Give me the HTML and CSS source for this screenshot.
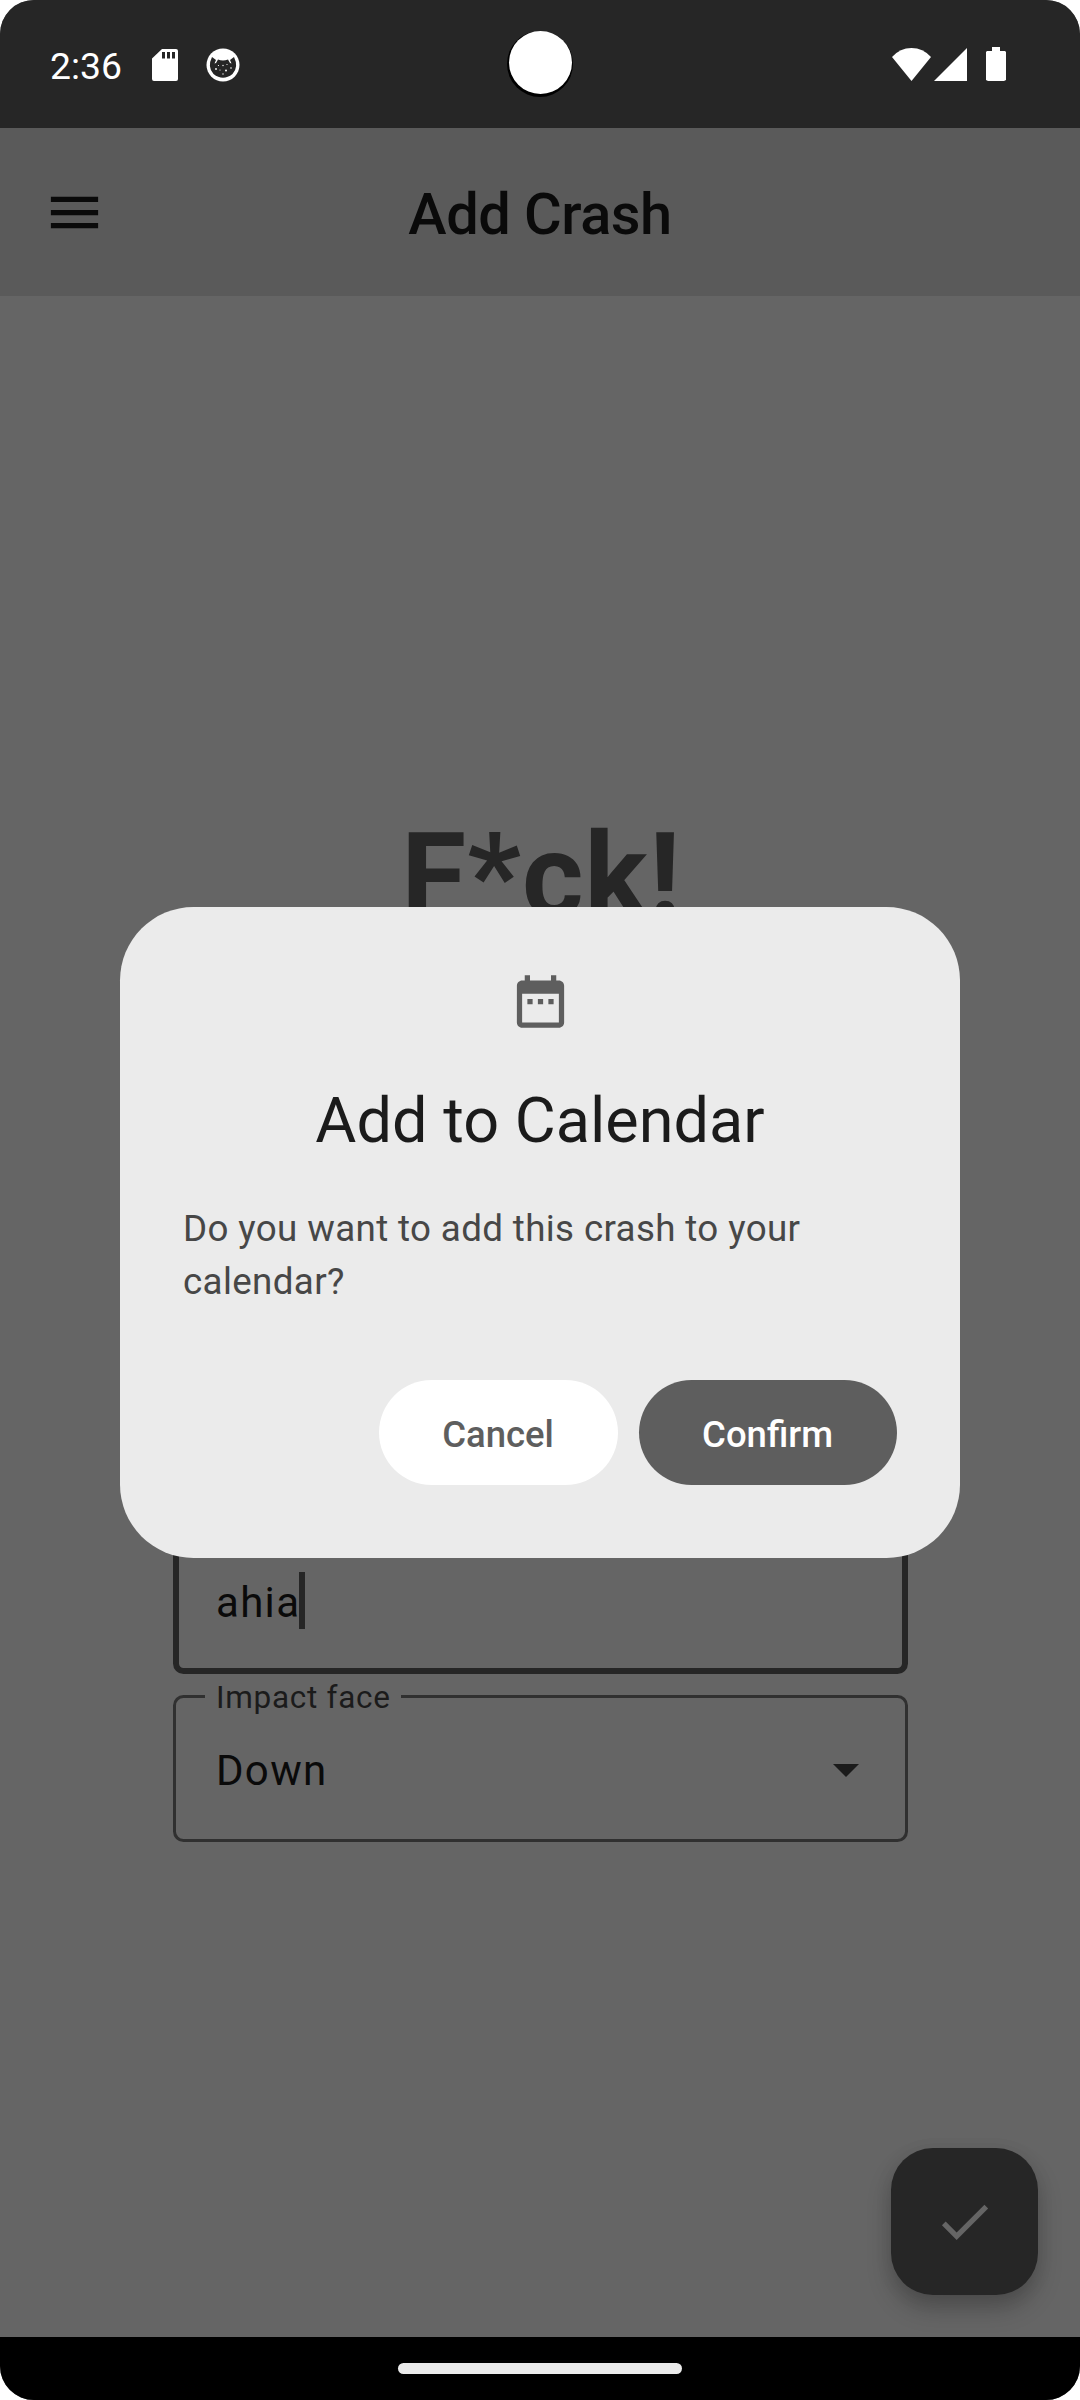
FILE: index.html
```html
<!DOCTYPE html>
<html lang="en">
<head>
<meta charset="utf-8">
<title>Add Crash</title>
<link rel="stylesheet" href="styles.css">
</head>
<body>
<div class="screen">
  <header class="status">
    <span class="clock">2:36</span>
    <svg class="sd" viewBox="0 0 26 32"><path fill="#fff" fill-rule="evenodd" d="M10 0H24a2 2 0 0 1 2 2V30a2 2 0 0 1-2 2H2a2 2 0 0 1-2-2V9.500zM10 3V9.500H13V3zM15 3V9.500H18V3zM20 3V9.500H23V3z"/></svg>
    <svg class="cat" viewBox="0 0 34 34"><circle cx="17" cy="17" r="16.500" fill="#fff"/><path fill="#262626" d="M6 9 10 12 8.500 15.500 10 15 12 11.500Q17 13.500 22 11.500L24 15 25.500 15.500 24 12 28 9Q33 19 26.500 26 17 33.500 7.500 26 1 19 6 9z"/><g fill="#fff"><circle cx="10" cy="21" r=".9"/><circle cx="17" cy="17.500" r=".7"/><circle cx="14" cy="22" r=".6"/><circle cx="20" cy="22.500" r="1"/><circle cx="25" cy="20" r=".8"/><circle cx="17" cy="26" r=".7"/><circle cx="21" cy="16.500" r=".6"/><circle cx="12.500" cy="17.500" r=".6"/></g></svg>
    <span class="camera"></span>
    <svg class="wifi" viewBox="0 0 39 33"><path fill="#fff" d="M0 9Q8 0 19.500 0T39 9L19.500 33z"/></svg>
    <svg class="signal" viewBox="0 0 33 33"><path fill="#fff" d="M33 0V33H0z"/></svg>
    <svg class="battery" viewBox="0 0 20 34"><path fill="#fff" d="M6 0H14V4H19L20 5V33L18 34H2L0 33V5L1 4H6z"/></svg>
  </header>
  <div class="appbar">
    <svg class="icon" viewBox="0 0 24 24"><path fill="#0a0a0a" d="M3 18h18v-2H3v2zm0-5h18v-2H3v2zm0-7v2h18V6H3z"/></svg>
    <h1 class="title">Add Crash</h1>
  </div>
  <main class="content">
    <div class="headline">F*ck!</div>
    <div class="field focused"><span>ahia</span><i class="caret"></i></div>
    <div class="field select">
      <span class="label">Impact face</span>
      <span>Down</span>
      <svg class="arrow" viewBox="0 0 26 13"><path fill="#1b1b1b" d="M0 0H26L13 13z"/></svg>
    </div>
    <button class="fab"><svg class="icon" viewBox="0 0 24 24"><path fill="#656565" d="M9 16.170 4.830 12l-1.420 1.410L9 19 21 7l-1.410-1.410z"/></svg></button>
  </main>
  <footer class="nav"><span class="pill"></span></footer>
  <section class="dialog">
    <svg class="icon" viewBox="0 0 24 24"><path fill="#5e5e5e" d="M9 11H7v2h2v-2zm4 0h-2v2h2v-2zm4 0h-2v2h2v-2zm2-7h-1V2h-2v2H8V2H6v2H5c-1.110 0-1.990.9-1.990 2L3 20c0 1.100.89 2 2 2h14c1.100 0 2-.9 2-2V6c0-1.100-.9-2-2-2zm0 16H5V9h14v11z"/></svg>
    <h2 class="dialog-title">Add to Calendar</h2>
    <p class="dialog-text">Do you want to add this crash to your calendar?</p>
    <div class="actions">
      <button class="btn cancel">Cancel</button>
      <button class="btn confirm">Confirm</button>
    </div>
  </section>
</div>
</body>
</html>
```
FILE: styles.css
```css
* { box-sizing: border-box; }
body { margin: 0; background: #fff; font-family: Roboto, sans-serif; }
svg { display: block; flex: none; }
button { border: 0; font-family: inherit; }
.screen { position: relative; width: 1080px; height: 2400px; display: flex; flex-direction: column; background: #656565; border-radius: 34px; overflow: hidden; }
.status { position: relative; height: 128px; background: #262626; color: #fff; display: flex; align-items: center; padding: 0 74px 0 50px; }
.clock { width: 102px; font-size: 37.300px; line-height: 44px; margin-top: 4px; }
.sd { width: 26px; height: 32px; margin-top: 2px; }
.cat { width: 34px; height: 34px; margin: 2px 0 0 28px; }
.wifi { width: 39px; height: 33px; margin-left: auto; }
.signal { width: 33px; height: 33px; margin-left: 3px; }
.battery { width: 20px; height: 34px; margin-left: 19px; }
.camera { position: absolute; left: 509px; top: 31px; width: 63px; height: 63px; border-radius: 50%; background: #fff; box-shadow: -0.500px 1.500px 0 1.500px #000; }
.appbar { height: 168px; background: #5a5a5a; display: grid; grid-template-columns: 63px 1fr 63px; align-items: center; padding: 0 43px; color: #0a0a0a; }
.icon { width: 63px; height: 63px; }
.title { margin: 0; padding-top: 4px; text-align: center; font-size: 57.750px; line-height: 73px; font-weight: 500; letter-spacing: -.5px; }
.content { position: relative; height: 2041px; padding: 512px 172px 0 173px; }
.headline { height: 719px; padding-left: 2px; text-align: center; font-size: 118.125px; line-height: 138px; font-weight: 700; letter-spacing: 1.100px; color: #262626; }
.field { position: relative; display: flex; align-items: center; height: 147px; padding: 0 40px; border: 3px solid #303030; border-radius: 10.500px; color: #0a0a0a; font-size: 42px; letter-spacing: 1.312px; }
.field > span:not(.label) { padding-top: 4px; }
.focused { border: 6px solid #262626; padding: 0 37px; }
.caret { width: 5.250px; height: 57px; background: #262626; margin-left: -1px; }
.select { margin-top: 21px; }
.label { position: absolute; left: 29px; top: -21px; padding: 0 11px; width: 196px; background: #656565; color: #1b1b1b; font-size: 31.500px; line-height: 42px; letter-spacing: .7px; white-space: nowrap; }
.arrow { width: 26px; height: 13px; margin: 4px 6px 0 auto; }
.fab { position: absolute; right: 42px; bottom: 42px; width: 147px; height: 147px; border-radius: 42px; background: #262626; display: grid; place-items: center; padding: 0; box-shadow: 0 14px 24px rgba(0,0,0,.22), 0 4px 18px rgba(0,0,0,.08); }
.nav { height: 63px; background: #000; display: grid; place-items: center; }
.pill { width: 284px; height: 10.500px; border-radius: 6px; background: #ebebeb; }
.dialog { position: absolute; left: 120px; top: 907px; width: 840px; height: 651px; border-radius: 73.500px; background: #ebebeb; padding: 63px; display: flex; flex-direction: column; align-items: center; }
.dialog-title { margin: 46px 0 40px; font-size: 63px; line-height: 84px; font-weight: 400; color: #1b1b1b; }
.dialog-text { margin: 0; align-self: stretch; font-size: 36.750px; line-height: 52.500px; letter-spacing: .36px; color: #474747; }
.actions { align-self: stretch; display: flex; justify-content: flex-end; gap: 21px; margin-top: 71.500px; }
.btn { height: 105px; border-radius: 53px; font-size: 36.500px; font-weight: 500; padding: 4px 1px 0 0; }
.cancel { width: 239px; background: #fff; color: #5e5e5e; }
.confirm { width: 258px; background: #5e5e5e; color: #fff; }
```
